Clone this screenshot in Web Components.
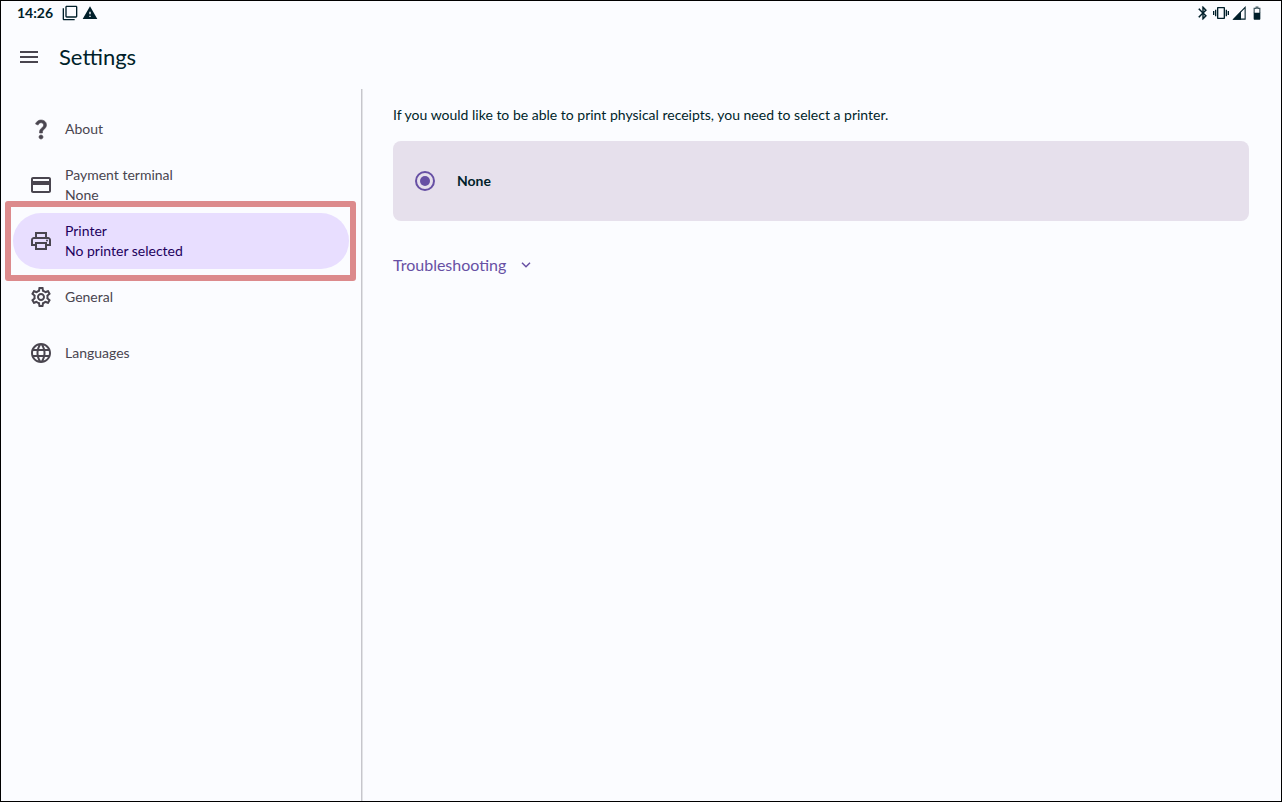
<!DOCTYPE html>
<html lang="en">
<head>
<meta charset="utf-8">
<meta name="viewport" content="width=device-width, initial-scale=1">
<title>Settings</title>
<style>
  html, body { height: 100%; margin: 0; }
  body {
    --surface: #fbfcff;
    --ink: #001f2a;
    --muted: #49454f;
    --primary: #6750a4;
    --selected: #e8deff;
    --on-selected: #22005d;
    --card: #e6e0ec;
    --outline: #c6c6cc;
    --outline-soft: #e2e3e6;
    --callout: #dc8a8c;
    font: 14px/20px Lato, "Liberation Sans", sans-serif;
    color: var(--ink);
    background: var(--surface);
  }
</style>
</head>
<body>
<settings-screen>
  <status-bar slot="status" time="14:26"></status-bar>
  <app-bar slot="header">Settings</app-bar>
  <settings-nav slot="nav">
    <nav-item icon="help">About</nav-item>
    <nav-item icon="card">Payment terminal<span slot="detail">None</span></nav-item>
    <nav-item icon="printer" selected>Printer<span slot="detail">No printer selected</span></nav-item>
    <nav-item icon="gear">General</nav-item>
    <nav-item icon="globe">Languages</nav-item>
  </settings-nav>
  <printer-panel>
    <span slot="intro">If you would like to be able to print physical receipts, you need to select a printer.</span>
    <radio-card name="printer" value="none" checked>None</radio-card>
    <disclosure-button slot="more">Troubleshooting</disclosure-button>
  </printer-panel>
</settings-screen>

<script>
  const define = (name, markup, setup) => {
    const template = document.createElement('template');
    template.innerHTML = markup;
    customElements.define(name, class extends HTMLElement {
      constructor() {
        super();
        this.attachShadow({ mode: 'open' }).append(template.content.cloneNode(true));
      }
      connectedCallback() {
        if (setup) setup(this, this.shadowRoot);
      }
    });
  };

  const icons = {
    menu: '<path d="M3 18h18v-2H3v2zm0-5h18v-2H3v2zm0-7v2h18V6H3z"/>',
    help: '<path stroke="currentColor" stroke-width=".6" d="M11.07 12.85c.77-1.39 2.25-2.21 3.11-3.44.91-1.29.4-3.7-2.18-3.7-1.69 0-2.52 1.28-2.87 2.34L6.54 6.96C7.25 4.83 9.18 3 11.99 3c2.35 0 3.96 1.07 4.78 2.41.7 1.15 1.11 3.3.03 4.9-1.2 1.77-2.35 2.31-2.97 3.45-.25.46-.35.76-.35 2.24h-2.89c-.01-.78-.13-2.05.48-3.15zM14 20c0 1.1-.9 2-2 2s-2-.9-2-2 .9-2 2-2 2 .9 2 2z"/>',
    card: '<path d="M20 4H4c-1.11 0-1.99.89-1.99 2L2 18c0 1.11.89 2 2 2h16c1.11 0 2-.89 2-2V6c0-1.11-.89-2-2-2zm0 14H4v-6h16v6zm0-10H4V6h16v2z"/>',
    printer: '<path d="M19 8h-1V3H6v5H5c-1.66 0-3 1.34-3 3v6h4v4h12v-4h4v-6c0-1.66-1.34-3-3-3zM8 5h8v3H8V5zm8 12v2H8v-4h8v2zm2-2v-2H6v2H4v-4c0-.55.45-1 1-1h14c.55 0 1 .45 1 1v4h-2z"/><circle cx="18" cy="11.5" r="1"/>',
    gear: '<path d="M19.43 12.98c.04-.32.07-.64.07-.98 0-.34-.03-.66-.07-.98l2.11-1.65c.19-.15.24-.42.12-.64l-2-3.46c-.09-.16-.26-.25-.44-.25-.06 0-.12.01-.17.03l-2.49 1c-.52-.4-1.08-.73-1.69-.98l-.38-2.65C14.46 2.18 14.25 2 14 2h-4c-.25 0-.46.18-.49.42l-.38 2.65c-.61.25-1.17.59-1.69.98l-2.49-1c-.06-.02-.12-.03-.18-.03-.17 0-.34.09-.43.25l-2 3.46c-.13.22-.07.49.12.64l2.11 1.65c-.04.32-.07.65-.07.98 0 .33.03.66.07.98l-2.11 1.65c-.19.15-.24.42-.12.64l2 3.46c.09.16.26.25.44.25.06 0 .12-.01.17-.03l2.49-1c.52.4 1.08.73 1.69.98l.38 2.65c.03.24.24.42.49.42h4c.25 0 .46-.18.49-.42l.38-2.65c.61-.25 1.17-.59 1.69-.98l2.49 1c.06.02.12.03.18.03.17 0 .34-.09.43-.25l2-3.46c.12-.22.07-.49-.12-.64l-2.11-1.65zm-1.98-1.71c.04.31.05.52.05.73 0 .21-.02.43-.05.73l-.14 1.13.89.7 1.08.84-.7 1.21-1.27-.51-1.04-.42-.9.68c-.43.32-.84.56-1.25.73l-1.06.43-.16 1.13-.2 1.35h-1.4l-.19-1.35-.16-1.13-1.06-.43c-.43-.18-.83-.41-1.23-.71l-.91-.7-1.06.43-1.27.51-.7-1.21 1.08-.84.89-.7-.14-1.13c-.03-.31-.05-.54-.05-.74s.02-.43.05-.73l.14-1.13-.89-.7-1.08-.84.7-1.21 1.27.51 1.04.42.9-.68c.43-.32.84-.56 1.25-.73l1.06-.43.16-1.13.2-1.35h1.39l.19 1.35.16 1.13 1.06.43c.43.18.83.41 1.23.71l.91.7 1.06-.43 1.27-.51.7 1.21-1.07.85-.89.7.14 1.13zM12 8c-2.21 0-4 1.79-4 4s1.79 4 4 4 4-1.79 4-4-1.79-4-4-4zm0 6c-1.1 0-2-.9-2-2s.9-2 2-2 2 .9 2 2-.9 2-2 2z"/>',
    globe: '<path d="M11.99 2C6.47 2 2 6.48 2 12s4.47 10 9.99 10C17.52 22 22 17.52 22 12S17.52 2 11.99 2zm6.93 6h-2.95c-.32-1.25-.78-2.45-1.38-3.56 1.84.63 3.37 1.91 4.33 3.56zM12 4.04c.83 1.2 1.48 2.53 1.91 3.96h-3.82c.43-1.43 1.08-2.76 1.91-3.96zM4.26 14C4.1 13.36 4 12.69 4 12s.1-1.36.26-2h3.38c-.08.66-.14 1.32-.14 2s.06 1.34.14 2H4.26zm.82 2h2.95c.32 1.25.78 2.45 1.38 3.56-1.84-.63-3.37-1.9-4.33-3.56zm2.95-8H5.08c.96-1.66 2.49-2.93 4.33-3.56C8.81 5.55 8.35 6.75 8.03 8zM12 19.96c-.83-1.2-1.48-2.53-1.91-3.96h3.82c-.43 1.43-1.08 2.76-1.91 3.96zM14.34 14H9.66c-.09-.66-.16-1.32-.16-2s.07-1.35.16-2h4.68c.09.65.16 1.32.16 2s-.07 1.34-.16 2zm.25 5.56c.6-1.11 1.06-2.31 1.38-3.56h2.95c-.96 1.65-2.49 2.93-4.33 3.56zM16.36 14c.08-.66.14-1.32.14-2s-.06-1.34-.14-2h3.38c.16.64.26 1.31.26 2s-.1 1.36-.26 2h-3.38z"/>',
    chevron: '<path d="M6 8.600 12 14.600 18 8.600" fill="none" stroke="currentColor" stroke-width="2.200"/>',
    windows: '<path d="M3 5H1v16c0 1.1.9 2 2 2h16v-2H3V5zm18-4H7c-1.1 0-2 .9-2 2v14c0 1.1.9 2 2 2h14c1.1 0 2-.9 2-2V3c0-1.1-.9-2-2-2zm0 16H7V3h14v14z"/>',
    warning: '<path d="M1 21h22L12 2 1 21zm12-3h-2v-2h2v2zm0-4h-2v-4h2v4z"/>',
    bluetooth: '<path d="M17.71 7.71 12 2h-1v7.59L6.41 5 5 6.41 10.59 12 5 17.59 6.41 19 11 14.41V22h1l5.71-5.71-4.3-4.29 4.3-4.29zM13 5.83l1.88 1.88L13 9.59V5.83zm1.88 10.46L13 18.17v-3.76l1.88 1.88z" stroke="currentColor" stroke-width=".3"/>',
    vibrate: '<path d="M0 15h2V9H0v6zm3 2h2V7H3v10zm19-8v6h2V9h-2zm-3 8h2V7h-2v10zM16.5 3h-9C6.67 3 6 3.67 6 4.5v15c0 .83.67 1.5 1.5 1.5h9c.83 0 1.5-.67 1.5-1.5v-15c0-.83-.67-1.5-1.5-1.5zM16 19H8V5h8v14z"/>',
    signal: '<path d="M15 9.500 2.500 22H15z"/><path d="M21.200 3.500V21.200H4z" fill="none" stroke="currentColor" stroke-width="1.600"/>',
    battery: '<path d="M7.750 12V5h3V3h2.500v2h3v7" fill="none" stroke="currentColor" stroke-width="1.800" opacity=".75"/><path d="M7 11.500h10v9c0 .8-.6 1.500-1.300 1.500H8.300C7.600 22 7 21.300 7 20.500z"/>'
  };

  define('ui-icon', `
    <style>
      :host { display: block; flex: none; width: 24px; height: 24px; }
      svg { display: block; width: 100%; height: 100%; fill: currentColor; }
    </style>
    <svg viewBox="0 0 24 24" aria-hidden="true"></svg>`,
    (host, root) => { root.querySelector('svg').innerHTML = icons[host.getAttribute('name')] || ''; });

  define('settings-screen', `
    <style>
      :host {
        box-sizing: border-box; min-height: 100%;
        display: grid; grid-template: auto auto 1fr / 361px 1fr;
        border: 1px solid #000;
      }
      .status, .header { grid-column: 1 / -1; }
      .nav { border-right: 1px solid var(--outline); }
      main { min-width: 0; border-left: 1px solid var(--outline-soft); }
    </style>
    <div class="status"><slot name="status"></slot></div>
    <header class="header"><slot name="header"></slot></header>
    <div class="nav"><slot name="nav"></slot></div>
    <main><slot></slot></main>`);

  define('status-bar', `
    <style>
      :host {
        display: flex; justify-content: space-between; align-items: center;
        height: 24px; padding: 0 16px; font-weight: 700;
      }
      div { display: flex; align-items: center; gap: 4px; }
      time { margin-right: 5px; }
      ui-icon { width: 16px; height: 16px; }
      .right { gap: 2px; }
    </style>
    <div>
      <time></time>
      <ui-icon name="windows"></ui-icon>
      <ui-icon name="warning"></ui-icon>
    </div>
    <div class="right">
      <ui-icon name="bluetooth"></ui-icon>
      <ui-icon name="vibrate"></ui-icon>
      <ui-icon name="signal"></ui-icon>
      <ui-icon name="battery"></ui-icon>
    </div>`,
    (host, root) => { root.querySelector('time').textContent = host.getAttribute('time'); });

  define('app-bar', `
    <style>
      :host { display: flex; align-items: center; gap: 18px; height: 64px; padding: 0 16px; }
      button { padding: 0; border: 0; background: none; color: var(--muted); cursor: pointer; }
      h1 { margin: 0; font-size: 22px; line-height: 28px; font-weight: 400; }
    </style>
    <button type="button" aria-label="Menu"><ui-icon name="menu"></ui-icon></button>
    <h1><slot></slot></h1>`);

  define('settings-nav', `
    <style>
      :host { display: block; }
      nav { display: flex; flex-direction: column; padding: 12px; }
    </style>
    <nav aria-label="Settings"><slot></slot></nav>`);

  define('nav-item', `
    <style>
      :host { display: block; position: relative; color: var(--muted); }
      a {
        display: flex; align-items: center; gap: 12px;
        height: 56px; padding: 0 16px; border-radius: 28px;
        color: inherit; text-decoration: none;
      }
      ui-icon { color: var(--muted); }
      .text { display: flex; flex-direction: column; }
      :host([selected]) { color: var(--on-selected); }
      :host([selected]) a { background: var(--selected); }
      :host([selected])::after {
        content: ""; position: absolute; inset: -12px -7px -12px -8px;
        border: 6px solid var(--callout); border-radius: 3px; pointer-events: none;
      }
    </style>
    <a href="#">
      <ui-icon></ui-icon>
      <span class="text"><span><slot></slot></span><slot name="detail"></slot></span>
    </a>`,
    (host, root) => {
      const icon = document.createElement('ui-icon');
      icon.setAttribute('name', host.getAttribute('icon'));
      root.querySelector('ui-icon').replaceWith(icon);
      if (host.hasAttribute('selected')) root.querySelector('a').setAttribute('aria-current', 'page');
    });

  define('printer-panel', `
    <style>
      :host { display: block; padding: 16px 32px 16px 30px; }
      p { margin: 0 0 16px; }
      .more { margin-top: 32px; }
    </style>
    <p><slot name="intro"></slot></p>
    <slot></slot>
    <div class="more"><slot name="more"></slot></div>`);

  define('radio-card', `
    <style>
      :host { display: block; }
      label {
        display: flex; align-items: center; gap: 22px; height: 80px; padding: 0 22px;
        border-radius: 8px; background: var(--card); font-weight: 700; cursor: pointer;
      }
      input {
        appearance: none; box-sizing: border-box; width: 20px; height: 20px; margin: 0;
        display: grid; place-content: center;
        border: 2px solid var(--primary); border-radius: 50%;
      }
      input:checked::before {
        content: ""; width: 10px; height: 10px; border-radius: 50%; background: var(--primary);
      }
    </style>
    <label><input type="radio"><span><slot></slot></span></label>`,
    (host, root) => {
      const input = root.querySelector('input');
      input.name = host.getAttribute('name');
      input.value = host.getAttribute('value');
      input.checked = host.hasAttribute('checked');
    });

  define('disclosure-button', `
    <style>
      :host { display: block; }
      button {
        display: flex; align-items: center; gap: 12px; padding: 0; border: 0; background: none;
        font: inherit; font-size: 16px; line-height: 24px; color: var(--primary); cursor: pointer;
      }
      ui-icon { width: 16px; height: 16px; }
    </style>
    <button type="button" aria-expanded="false"><slot></slot><ui-icon name="chevron"></ui-icon></button>`);
</script>
</body>
</html>
